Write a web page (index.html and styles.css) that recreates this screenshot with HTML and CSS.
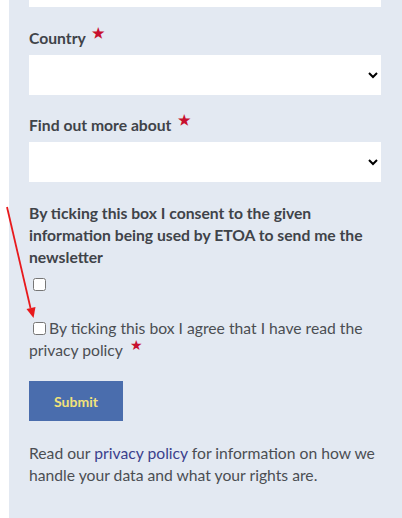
FILE: index.html
```html
<!DOCTYPE html>
<html lang="en">
<head>
<meta charset="utf-8">
<link rel="stylesheet" href="styles.css">
</head>
<body>
<div class="panel">
  <input class="field field-top" type="text">
  <label class="lbl">Country <span class="req">★</span></label>
  <select class="field sel"><option></option></select>
  <label class="lbl lbl-2">Find out more about <span class="req">★</span></label>
  <select class="field sel"><option></option></select>
  <p class="consent">By ticking this box I consent to the given information being used by ETOA to send me the newsletter</p>
  <div class="cb-row"><input type="checkbox" class="cb"></div>
  <p class="agree"><input type="checkbox" class="cb cb-inline">By ticking this box I agree that I have read the privacy policy <span class="req">★</span></p>
  <button class="submit" type="button">Submit</button>
  <p class="note">Read our <a class="link" href="#">privacy policy</a> for information on how we handle your data and what your rights are.</p>
</div>
<svg class="arrow" width="40" height="325" viewBox="0 0 40 325">
  <line x1="7" y1="207" x2="30.5" y2="308" stroke="#e8191c" stroke-width="1.8"/>
  <polygon points="26.5,309 35.5,307 33.5,318" fill="#e8191c"/>
</svg>
</body>
</html>
```
FILE: styles.css
```css
html, body {
  margin: 0;
  padding: 0;
  background: #ffffff;
}
body {
  font-family: Lato, "Open Sans", sans-serif;
  height: 518px;
  overflow: hidden;
  position: relative;
}
.panel {
  margin-left: 9px;
  background: #e3e9f2;
  padding: 0 21px 0 20px;
  height: 518px;
  overflow: hidden;
  display: flex;
  flex-direction: column;
  align-items: flex-start;
}
.field {
  box-sizing: border-box;
  flex: none;
  width: 352px;
  height: 40px;
  border: none;
  background: #ffffff;
  margin: 0;
  font-family: inherit;
}
.field-top {
  margin-top: -33px;
}
.sel {
  margin-top: 4px;
  padding: 0 6px;
  color: #000;
}
.lbl {
  display: block;
  margin-top: 19px;
  font-size: 15.7px;
  line-height: 24px;
  font-weight: 700;
  color: #3f4349;
}
.lbl-2 {
  margin-top: 18px;
}
.req {
  color: #c8102e;
  font-size: 14px;
  position: relative;
  top: -6px;
  margin-left: 3px;
}
.consent {
  margin: 20px 0 0 0;
  font-size: 15.7px;
  line-height: 22px;
  font-weight: 700;
  color: #3f4349;
}
.cb-row {
  height: 22px;
  margin-top: 7px;
}
.cb {
  width: 13px;
  height: 13px;
  margin: 3px 3px 3px 4px;
}
.agree {
  margin: 20px 0 0 0;
  font-size: 15.7px;
  line-height: 22px;
  color: #4b4e53;
}
.cb-inline {
  margin: 0 3px 0 4px;
  vertical-align: -1px;
}
.submit {
  flex: none;
  margin-top: 19px;
  width: 94px;
  height: 40px;
  border: none;
  background: #4a6dad;
  color: #f2e27a;
  font-family: inherit;
  font-weight: 700;
  font-size: 14px;
  padding: 0;
}
.note {
  margin: 21px 0 0 0;
  font-size: 15.7px;
  line-height: 22px;
  color: #4b4e53;
}
.link {
  color: #3b3f8c;
  text-decoration: none;
}
.arrow {
  position: absolute;
  left: 0;
  top: 0;
}
```
